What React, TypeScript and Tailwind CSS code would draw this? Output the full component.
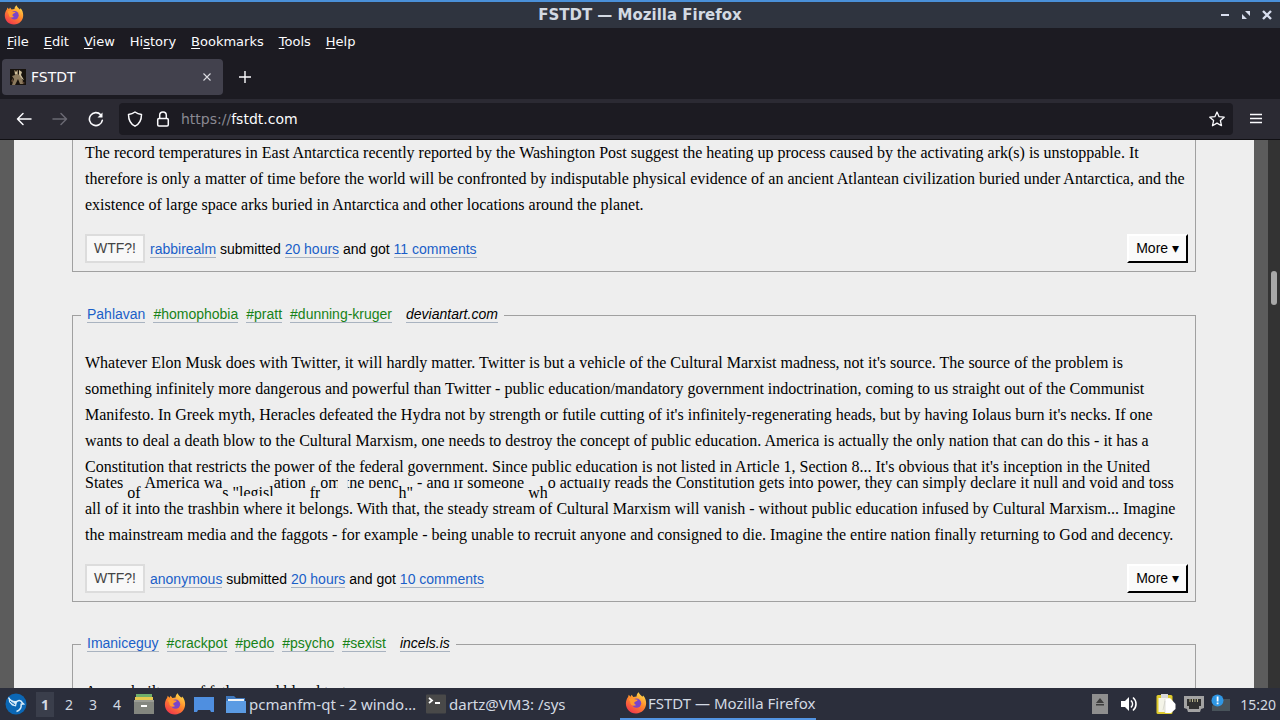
import type { ReactNode } from "react";

const SERIF = "font-['Liberation_Serif',serif]";
const SANS = "font-['Liberation_Sans',sans-serif]";
const UI = "font-['DejaVu_Sans',sans-serif]";

const menus = [
  { before: "", key: "F", after: "ile" },
  { before: "", key: "E", after: "dit" },
  { before: "", key: "V", after: "iew" },
  { before: "Hi", key: "s", after: "tory" },
  { before: "", key: "B", after: "ookmarks" },
  { before: "", key: "T", after: "ools" },
  { before: "", key: "H", after: "elp" },
];

function FirefoxIcon({ className }: { className?: string }) {
  return (
    <svg viewBox="0 0 20 20" className={className} aria-hidden="true">
      <defs>
        <linearGradient id="fx" x1="0.8" y1="0" x2="0.2" y2="1">
          <stop offset="0" stopColor="#ffe14d" />
          <stop offset="0.45" stopColor="#ff8a2b" />
          <stop offset="1" stopColor="#f0304f" />
        </linearGradient>
      </defs>
      <path
        d="M10 19.5C4.5 19.5.8 15.5.8 10.5.8 8 1.6 6 2.8 4.5L3.4 2.5 5 4.3 6 2.6 7.6 4.600C8.500 4.200 9.500 4 10.500 4 10.500 2.500 11.300 1.200 12.500.3c.6 2 2 2.700 3.400 4.100l.6-1.200c2 2 2.700 4.600 2.700 7.100 0 5.200-3.900 9.200-9.200 9.200z"
        fill="url(#fx)"
      />
      <circle cx="10.5" cy="10.2" r="4.2" fill="#7a45c9" />
      <path d="M3.500 6.500c2-1.500 4-.8 5.500.2l2.600.4c-.4 1.500-2.400 1.300-3 2.300-.4 1 .2 2.200 1.600 2.400-2.500 1.600-5.400.2-5.400-2.400z" fill="#ff9a30" />
    </svg>
  );
}

function TitleBar() {
  return (
    <header className={`${UI} grid h-7 shrink-0 grid-cols-[1fr_auto_1fr] items-center border-t-2 border-[#4a90d9] bg-[#2f343f] px-1`}>
      <FirefoxIcon className="h-5 w-5" />
      <h1 className="text-[15px] leading-5 font-bold text-[#d3dae3]">FSTDT — Mozilla Firefox</h1>
      <div className="flex items-center justify-end gap-[9px] pr-[3px] text-[#d8deee]">
        <button aria-label="Minimize">
          <svg viewBox="0 0 12 12" className="h-3 w-3" fill="currentColor">
            <path d="M2 5h8v2H2z" />
          </svg>
        </button>
        <button aria-label="Restore">
          <svg viewBox="0 0 12 12" className="h-3 w-3" fill="currentColor">
            <path d="M5 2h5v5zM2 5v5h5z" />
          </svg>
        </button>
        <button aria-label="Close">
          <svg viewBox="0 0 12 12" className="h-3 w-3" stroke="currentColor" strokeWidth="2.4">
            <path d="M2 2l8 8M10 2l-8 8" />
          </svg>
        </button>
      </div>
    </header>
  );
}

function MenuBar() {
  return (
    <nav className="flex h-[27px] shrink-0 items-center gap-[15px] px-[7px] text-[13px]">
      {menus.map((m) => (
        <button key={m.key + m.after}>
          {m.before}
          <span className="underline underline-offset-2">{m.key}</span>
          {m.after}
        </button>
      ))}
    </nav>
  );
}

function TabStrip() {
  return (
    <div className="flex h-11 shrink-0 items-center pl-0.5">
      <div className="flex h-9 w-[221px] items-center rounded bg-[#42414d] px-2">
        <svg viewBox="0 0 16 16" className="h-4 w-4" aria-hidden="true">
          <path d="M0 0h16v16H0z" fill="#17120d" />
          <path d="M4 1l2 1 2-1v4l3 3 2 4v3h-3l-2-5-3 6H2l2-6-2-3 3-1z" fill="#8c7a5e" />
          <path d="M9 1l3 2-1 3 3 5-2-1-3-4zM5 3h2v2H5z" fill="#cbbd9b" />
          <path d="M1 12l2-3v5zM12 12l3 2-2 1z" fill="#5d4432" />
        </svg>
        <span className="ml-[5px] flex-1 text-[14px]">FSTDT</span>
        <button aria-label="Close tab" className="p-1">
          <svg viewBox="0 0 8 8" className="h-2 w-2" stroke="#dcdce2" strokeWidth="1.1">
            <path d="M0.5 0.5l7 7M7.5 0.5l-7 7" />
          </svg>
        </button>
      </div>
      <button aria-label="New tab" className="ml-4">
        <svg viewBox="0 0 12 12" className="h-3 w-3" stroke="#fbfbfe" strokeWidth="1.4">
          <path d="M6 0v12M0 6h12" />
        </svg>
      </button>
    </div>
  );
}

function NavBar() {
  return (
    <div className="flex h-[41px] shrink-0 items-center border-b border-[#111014] bg-[#2b2a33] px-4">
      <button aria-label="Back">
        <svg viewBox="0 0 16 16" className="h-4 w-4" fill="none" stroke="#fbfbfe" strokeWidth="1.5" strokeLinecap="round" strokeLinejoin="round">
          <path d="M15 8H1.5M7 2.5L1.5 8 7 13.5" />
        </svg>
      </button>
      <button aria-label="Forward" className="ml-5" disabled>
        <svg viewBox="0 0 16 16" className="h-4 w-4" fill="none" stroke="#6a6973" strokeWidth="1.5" strokeLinecap="round" strokeLinejoin="round">
          <path d="M1 8h13.5M9 2.5L14.5 8 9 13.5" />
        </svg>
      </button>
      <button aria-label="Reload" className="ml-5">
        <svg viewBox="0 0 16 16" className="h-4 w-4" fill="none" stroke="#fbfbfe" strokeWidth="1.6" strokeLinecap="round">
          <path d="M14.3 9.3A6.5 6.5 0 1 1 12.7 3.7" />
          <path d="M14.5 1.5v5H9.500z" fill="#fbfbfe" stroke="none" />
        </svg>
      </button>
      <div className="ml-[15px] flex h-8 flex-1 items-center rounded bg-[#1c1b22] px-2">
        <svg viewBox="0 0 16 16" className="h-4 w-4" fill="none" stroke="#fbfbfe" strokeWidth="1.5" strokeLinejoin="round" aria-hidden="true">
          <path d="M8 1c2 1.5 4 2.200 6.500 2.500C14.500 9 12.500 13 8 15.200 3.500 13 1.500 9 1.500 3.500 4 3.200 6 2.500 8 1z" />
        </svg>
        <svg viewBox="0 0 16 16" className="ml-3 h-4 w-4" fill="none" stroke="#fbfbfe" strokeWidth="1.5" strokeLinejoin="round" aria-hidden="true">
          <rect x="2.700" y="7.500" width="10.600" height="7.500" rx="1.200" />
          <path d="M4.700 7.500V4.300a3.300 3.300 0 0 1 6.600 0v3.200" />
        </svg>
        <a href="https://fstdt.com" className="ml-[10px] flex-1 text-[14px]">
          <span className="text-[#8a8992]">https://</span>fstdt.com
        </a>
        <button aria-label="Bookmark this page">
          <svg viewBox="0 0 16 16" className="h-4 w-4" fill="none" stroke="#fbfbfe" strokeWidth="1.3" strokeLinejoin="round">
            <path d="M8 1l2.100 4.700 5.100.5-3.800 3.400 1.100 5.100L8 12.100l-4.500 2.600 1.100-5.100L.8 6.200l5.100-.5z" />
          </svg>
        </button>
      </div>
      <button aria-label="Open application menu" className="ml-[15px]">
        <svg viewBox="0 0 16 16" className="h-4 w-4" stroke="#fbfbfe" strokeWidth="1.4">
          <path d="M2 3.500h12M2 7.500h12M2 11.500h12" />
        </svg>
      </button>
    </div>
  );
}

function PageLink({ children, className = "text-[#1a5fc8]" }: { children: ReactNode; className?: string }) {
  return (
    <a href="#post" className={`border-b border-[#a9b3c0] ${className}`}>
      {children}
    </a>
  );
}

function PostLegend({ author, tags, source }: { author: string; tags: string[]; source: string }) {
  return (
    <legend className={`${SANS} -ml-1 flex gap-2 px-[6px] pb-0.5 text-[14px] leading-4`}>
      <PageLink>{author}</PageLink>
      {tags.map((tag) => (
        <PageLink key={tag} className="text-[#178217]">
          {tag}
        </PageLink>
      ))}
      <PageLink className="ml-1.5 text-black italic">{source}</PageLink>
    </legend>
  );
}

function PostFooter({ author, comments }: { author: string; comments: string }) {
  return (
    <div className={`${SANS} mt-4 flex h-[29px] items-center text-[14px] leading-4`}>
      <button className="h-full border-2 border-[#dcdcdc] bg-[#f8f8f8] px-[7px] pb-px text-[#444]">WTF?!</button>
      <p className="ml-[5px] flex-1">
        <PageLink>{author}</PageLink> submitted <PageLink>20 hours</PageLink> and got <PageLink>{comments}</PageLink>
      </p>
      <button className="h-full border-2 border-t-white border-r-black border-b-black border-l-white bg-[#fafafa] px-[7px] pb-px text-black">
        More ▾
      </button>
    </div>
  );
}

// A piece of the torn line that is drawn ten pixels lower than its neighbours.
function Dropped({ children, className = "" }: { children: ReactNode; className?: string }) {
  return <span className={`relative top-[10px] ${className}`}>{children}</span>;
}

function Cut({ children, className = "" }: { children: ReactNode; className?: string }) {
  return <span className={className}>{children}</span>;
}

const body = `${SERIF} text-base leading-[26px] text-black`;
const card = "border border-[#a0a0a0] pl-3 pr-[7px] pb-2";

function Page() {
  return (
    <div className="flex min-h-0 flex-1 bg-[#5c5c5c] pl-[14px]">
      <main className="min-w-0 flex-1 overflow-hidden bg-[#eeeeee] px-[58px]">
        <article className={`${card} border-t-0`}>
          <p className={body}>
            The record temperatures in East Antarctica recently reported by the Washington Post suggest the heating up process
            caused by the activating ark(s) is unstoppable. It therefore is only a matter of time before the world will be
            confronted by indisputable physical evidence of an ancient Atlantean civilization buried under Antarctica, and the
            existence of large space arks buried in Antarctica and other locations around the planet.
          </p>
          <PostFooter author="rabbirealm" comments="11 comments" />
        </article>

        <fieldset className={`${card} mt-[34px]`}>
          <PostLegend author="Pahlavan" tags={["#homophobia", "#pratt", "#dunning-kruger"]} source="deviantart.com" />
          <p className={`${body} mt-[25px]`}>
            Whatever Elon Musk does with Twitter, it will hardly matter. Twitter is but a vehicle of the Cultural Marxist
            madness, not it's source. The source of the problem is something infinitely more dangerous and powerful than Twitter
            - public education/mandatory government indoctrination, coming to us straight out of the Communist Manifesto. In
            Greek myth, Heracles defeated the Hydra not by strength or futile cutting of it's infinitely-regenerating heads, but
            by having Iolaus burn it's necks. If one wants to deal a death blow to the Cultural Marxism, one needs to destroy the
            concept of public education. America is actually the only nation that can do this - it has a Constitution that
            restricts the power of the federal government. Since public education is not listed in Article 1, Section 8... It's
            obvious that it's inception in the United
          </p>
          <p className={`${body} -mt-[10px] flex h-[26px] whitespace-pre`}>
            <Cut>{"States "}</Cut>
            <Dropped className="[clip-path:inset(5px_0_8px_0)]">{"of "}</Dropped>
            <Cut>{"America wa"}</Cut>
            <Dropped className="[clip-path:inset(5px_0_10px_0)]">{'s "legisl'}</Dropped>
            <Cut className="[clip-path:inset(8px_0_0_0)]">{"ation "}</Cut>
            <Dropped className="[clip-path:inset(5px_0_8px_0)]">fr</Dropped>
            <Cut className="[clip-path:inset(8px_7px_0_0)]">{"om "}</Cut>
            <Cut className="[clip-path:inset(10px_0_0_3px)]">{"the benc"}</Cut>
            <Dropped className="[clip-path:inset(5px_0_0_0)]">{'h"'}</Dropped>
            <Cut className="[clip-path:inset(10px_0_0_0)]">{" - and if someone "}</Cut>
            <Dropped className="[clip-path:inset(5px_0_0_0)]">wh</Dropped>
            <Cut className="[clip-path:inset(9px_0_0_0)]">{"o actually "}</Cut>
            <Cut>reads the Constitution gets into power, they can simply declare it null and void and toss</Cut>
          </p>
          <p className={body}>
            all of it into the trashbin where it belongs. With that, the steady stream of Cultural Marxism will vanish - without
            public education infused by Cultural Marxism... Imagine the mainstream media and the faggots - for example - being
            unable to recruit anyone and consigned to die. Imagine the entire nation finally returning to God and decency.
          </p>
          <PostFooter author="anonymous" comments="10 comments" />
        </fieldset>

        <fieldset className={`${card} mt-[33px]`}>
          <PostLegend author="Imaniceguy" tags={["#crackpot", "#pedo", "#psycho", "#sexist"]} source="incels.is" />
          <p className={`${body} mt-[25px]`}>A man built one of fathers and blood tests</p>
        </fieldset>
      </main>
      <div className="w-[14px]" />
      <div className="w-3 bg-[#333333] pt-[131px] pl-[3px]">
        <div className="h-[34px] w-[6px] rounded-full bg-[#a8a8a8]" />
      </div>
    </div>
  );
}

function Taskbar() {
  return (
    <footer className="flex h-8 shrink-0 items-center bg-[#2b2e3b] font-['Noto_Sans',sans-serif] text-[15px] text-[#d3dae3]">
      <button aria-label="Applications" className="ml-[5px]">
        <svg viewBox="0 0 22 22" className="h-[22px] w-[22px]">
          <circle cx="11" cy="11" r="10.5" fill="#0b67b5" />
          <path
            d="M3.500 4.500C5.500 8 9 9 12 8.500c2-1.500 4.500-1 5 1l1.500 1.500-2.300.2c.3 3.500-1.700 6.300-4.700 7.300"
            fill="none"
            stroke="#d8ecfa"
            strokeWidth="1.5"
          />
          <path d="M3.500 4.500L4 9l3 3.500 4 1 1-4.500C8.500 9 5 7 3.500 4.500z" fill="#d8ecfa" />
          <path d="M5 8l3.500 3M8 9.500l2 2.500" stroke="#0b67b5" />
        </svg>
      </button>
      <div className="ml-[9px] flex items-center text-center text-[14px]">
        <button className="w-[18px] bg-[#3a3e4b] py-0.5 font-bold">1</button>
        <button className="ml-[6px] w-[18px]">2</button>
        <button className="ml-[6px] w-[18px]">3</button>
        <button className="ml-[6px] w-[18px]">4</button>
      </div>
      <button aria-label="File manager" className="ml-2">
        <svg viewBox="0 0 20 20" className="h-5 w-5">
          <path d="M2 0h16v4H2z" fill="#6fae6a" />
          <path d="M1 3h18v4H1z" fill="#e6c84f" />
          <path d="M0 6h20v14H0z" fill="#83867f" />
          <path d="M0 6h20v2H0z" fill="#9a9c94" />
          <path d="M7 11h6v2H7z" fill="#fff" />
        </svg>
      </button>
      <button aria-label="Firefox" className="ml-[10px]">
        <FirefoxIcon className="h-[22px] w-[22px]" />
      </button>
      <button aria-label="Show desktop" className="ml-2">
        <svg viewBox="0 0 20 20" className="h-5 w-5">
          <path d="M0 3h20v15h-3l-1-2H4l-1 2H0z" fill="#4f8fe0" />
        </svg>
      </button>
      <button className="ml-3 flex w-[200px] items-center gap-[3px]">
        <svg viewBox="0 0 20 20" className="h-5 w-5 shrink-0" aria-hidden="true">
          <path d="M0 2h8l2 2h9v5H0z" fill="#3f78bd" />
          <path d="M2 5h16v3H2z" fill="#eef3f8" />
          <path d="M0 7h20v12H0z" fill="#5b9be3" />
        </svg>
        <span className="whitespace-nowrap">pcmanfm-qt - 2 windo…</span>
      </button>
      <button className="flex w-[194px] items-center gap-[3px]">
        <svg viewBox="0 0 20 20" className="h-5 w-5 shrink-0" aria-hidden="true">
          <rect width="20" height="19" y="0.5" rx="1" fill="#494949" />
          <path d="M3 4l3 2.500L3 9M9 9h5" stroke="#fff" strokeWidth="1.8" fill="none" />
        </svg>
        <span className="whitespace-nowrap">dartz@VM3: /sys</span>
      </button>
      <button className="flex h-full w-[196px] items-center gap-px border-b-2 border-[#5294e2] pl-[5px]">
        <FirefoxIcon className="h-[22px] w-[22px] shrink-0" />
        <span className="whitespace-nowrap">FSTDT — Mozilla Firefox</span>
      </button>
      <div className="ml-auto flex items-center pr-1">
        <svg viewBox="0 0 16 20" className="h-5 w-4" aria-hidden="true">
          <path d="M0 0h16v20H0z" fill="#8f8f8f" />
          <path d="M4 9l4-5 4 5zM4 10h8v1.500H4z" fill="#3d3d3d" />
        </svg>
        <svg viewBox="0 0 18 18" className="ml-3 h-[18px] w-[18px]" aria-hidden="true">
          <path d="M1 6h4l4-4v14l-4-4H1z" fill="#fff" />
          <path d="M11 5.500c2 2 2 5 0 7M13 2.500c4 3.500 4 9.500 0 13" stroke="#fff" strokeWidth="1.6" fill="none" />
        </svg>
        <svg viewBox="0 0 20 22" className="ml-[18px] h-[22px] w-5" aria-hidden="true">
          <rect x="0.5" y="2" width="16" height="19" rx="1.5" fill="#dfcb2c" />
          <path d="M2.500 5h12v14h-12z" fill="#f4f4e8" />
          <path d="M5 1h7v4H5z" fill="#d8d8d8" />
          <path d="M9 6h6l4.500 5v5L15 20H9z" fill="#fff" />
          <path d="M9 6v14M9 8l-2 9" stroke="#c9c9c2" strokeWidth="0.6" />
        </svg>
        <svg viewBox="0 0 20 18" className="ml-2 h-[18px] w-5" aria-hidden="true">
          <path d="M0 1h20v12l-3 1-1 3H4l-1-3-3-1z" fill="#a3a3a3" />
          <path d="M3 4h14v7h-2v3H5v-3H3z" fill="#303030" />
          <path d="M6 4v3M8.500 4v3M11 4v3M13.500 4v3" stroke="#b9b48c" />
        </svg>
        <svg viewBox="0 0 20 20" className="ml-[7px] h-5 w-5" aria-hidden="true">
          <path d="M8 5h11v12H1v-5z" fill="#48535a" />
          <circle cx="6.5" cy="6.5" r="6" fill="#2f96e3" />
          <path d="M5.700 2.500h1.800v5H5.700zM5.700 8.500h1.800v1.800H5.700z" fill="#fff" />
        </svg>
        <time className="ml-[9px] text-[14px]">15:20</time>
      </div>
    </footer>
  );
}

export default function App() {
  return (
    <div className="flex h-screen flex-col overflow-hidden">
      <TitleBar />
      <div className={`${UI} flex shrink-0 flex-col bg-[#1c1b22] text-[#fbfbfe]`}>
        <MenuBar />
        <TabStrip />
        <NavBar />
      </div>
      <Page />
      <Taskbar />
    </div>
  );
}
